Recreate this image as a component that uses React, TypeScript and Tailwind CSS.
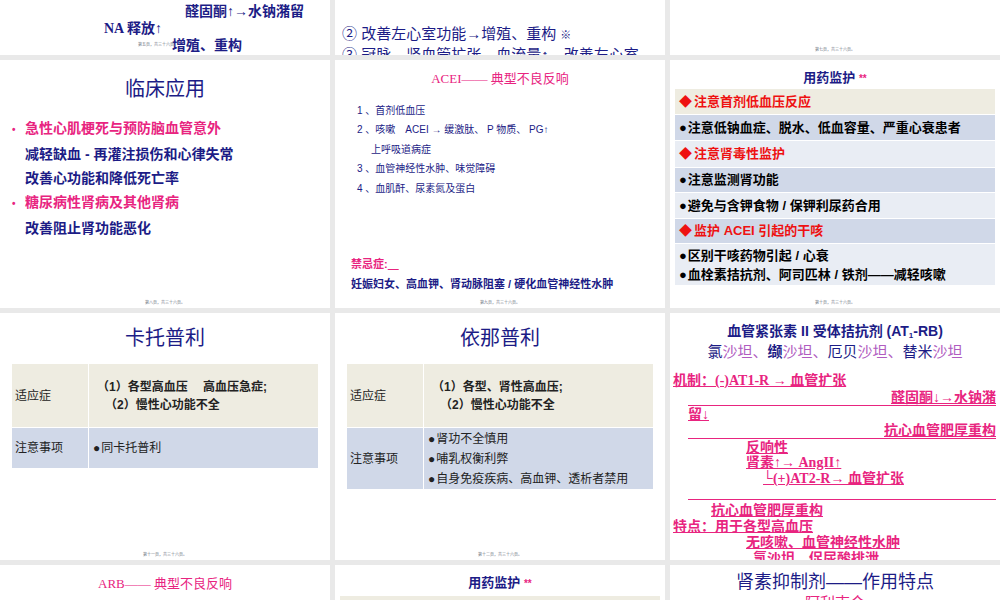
import React from "react";

const F = { fontFamily: '"Liberation Sans","Noto Sans CJK SC",sans-serif' };
const S = { fontFamily: '"Liberation Serif","Noto Sans CJK SC",serif' };

function Foot({ t }: { t: string }) {
  return <div className="absolute bottom-[2px] left-0 right-0 text-center text-[4px] text-gray-500">{t}</div>;
}

const Bul = () => <span className="mr-[1px]">●</span>;
const Dia = () => <span className="mr-[2px]">◆</span>;

export default function App() {
  return (
    <div style={F} className="w-[1000px] h-[600px] overflow-hidden bg-[#e9e9e9] grid grid-cols-[330px_330px_330px] grid-rows-[55px_248px_247px_35px] gap-[5px]">
      {/* row 1 */}
      <div className="relative bg-white overflow-hidden flex flex-col justify-end pb-[1px] text-[#1c1c86] font-bold text-[14px] leading-[17px]">
        <div className="pl-[185px]">醛固酮↑→水钠潴留</div>
        <div className="pl-[104px]" style={S}>NA 释放↑</div>
        <div className="pl-[172px]">增殖、重构</div>
        <div className="absolute left-[138px] bottom-[2px] text-[4px] text-gray-500 font-normal">第五页，共三十六页。</div>
      </div>
      <div className="relative bg-white overflow-hidden flex flex-col justify-end text-[#1c1c86] text-[15px] leading-[20px] pl-[7px]">
        <div>② 改善左心室功能→增殖、重构 <span className="text-[11px]">※</span></div>
        <div className="-mb-[10px] whitespace-nowrap">③ 冠脉、肾血管扩张→血流量↑→改善左心室</div>
      </div>
      <div className="relative bg-white overflow-hidden"><Foot t="第七页，共三十六页。" /></div>

      {/* row 2 */}
      <div className="relative bg-white overflow-hidden">
        <div className="text-center text-[#1c1c86] text-[20px] pt-[15px] leading-[28px]">临床应用</div>
        <div className="mt-[13px] pl-[12px] text-[14px] leading-[24px] font-bold">
          <div className="text-[#e8247f]"><span className="inline-block w-[13px] text-[10px]">•</span>急性心肌梗死与预防脑血管意外</div>
          <div className="text-[#1c1c86] pl-[13px]">减轻缺血 - 再灌注损伤和心律失常</div>
          <div className="text-[#1c1c86] pl-[13px]">改善心功能和降低死亡率</div>
          <div className="text-[#e8247f]"><span className="inline-block w-[13px] text-[10px]">•</span>糖尿病性肾病及其他肾病</div>
          <div className="text-[#1c1c86] pl-[13px]">改善阻止肾功能恶化</div>
        </div>
        <Foot t="第八页，共三十六页。" />
      </div>
      <div className="relative bg-white overflow-hidden">
        <div style={S} className="text-center text-[#e8247f] text-[13px] pt-[9px]">ACEI—— 典型不良反响</div>
        <div className="pl-[22px] mt-[12px] text-[10px] leading-[19.5px] text-[#1c1c86]">
          <div>1 、首剂低血压</div>
          <div>2 、咳嗽　ACEI → 缓激肽、 P 物质、 PG↑</div>
          <div className="pl-[14px]">上呼吸道病症</div>
          <div>3 、血管神经性水肿、味觉障碍</div>
          <div>4 、血肌酐、尿素氮及蛋白</div>
        </div>
        <div className="pl-[16px] mt-[56px] text-[11px] font-bold leading-[20px]">
          <div className="text-[#e8247f]">禁忌症:<span className="underline">　</span></div>
          <div className="text-[#1c1c86]">妊娠妇女、高血钾、肾动脉阻塞 / 硬化血管神经性水肿</div>
        </div>
        <Foot t="第九页，共三十六页。" />
      </div>
      <div className="relative bg-white overflow-hidden">
        <div className="text-center text-[#1c1c86] text-[13px] font-bold pt-[9px] leading-[18px]">用药监护 <span className="text-[#e8247f] text-[10px]">**</span></div>
        <div className="mx-[5px] mt-[1px] text-[13px] font-bold flex flex-col gap-[1px]">
          <div className="bg-[#eeece1] h-[25px] flex items-center pl-[4px] text-[#ee1111]"><Dia />注意首剂低血压反应</div>
          <div className="bg-[#d0d8e8] h-[25px] flex items-center pl-[4px] text-black"><Bul />注意低钠血症、脱水、低血容量、严重心衰患者</div>
          <div className="bg-[#e9edf4] h-[26px] flex items-center pl-[4px] text-[#ee1111]"><Dia />注意肾毒性监护</div>
          <div className="bg-[#d0d8e8] h-[24px] flex items-center pl-[4px] text-black"><Bul />注意监测肾功能</div>
          <div className="bg-[#e9edf4] h-[25px] flex items-center pl-[4px] text-black"><Bul />避免与含钾食物 / 保钾利尿药合用</div>
          <div className="bg-[#d0d8e8] h-[24px] flex items-center pl-[4px] text-[#ee1111]"><Dia />监护 ACEI 引起的干咳</div>
          <div className="bg-[#e9edf4] h-[41px] flex flex-col justify-center pl-[4px] text-black leading-[19px]">
            <div><Bul />区别干咳药物引起 / 心衰</div>
            <div><Bul />血栓素拮抗剂、阿司匹林 / 铁剂——减轻咳嗽</div>
          </div>
        </div>
        <Foot t="第十页，共三十六页。" />
      </div>

      {/* row 3 */}
      <div className="relative bg-white overflow-hidden">
        <div className="text-center text-[#1c1c86] text-[20px] pt-[11px] leading-[28px]">卡托普利</div>
        <div className="mx-[12px] mt-[12px] text-[12px] text-[#222] grid grid-cols-[76px_1fr] gap-[1px]">
          <div className="bg-[#eeece1] h-[63px] flex items-center pl-[3px]">适应症</div>
          <div className="bg-[#eeece1] h-[63px] flex flex-col justify-center pl-[8px] font-bold leading-[18px]">
            <div>（1）各型高血压　 高血压急症;</div>
            <div className="pl-[8px]">（2）慢性心功能不全</div>
          </div>
          <div className="bg-[#d0d8e8] h-[40px] flex items-center pl-[3px]">注意事项</div>
          <div className="bg-[#d0d8e8] h-[40px] flex items-center pl-[4px]"><Bul />同卡托普利</div>
        </div>
        <Foot t="第十一页，共三十六页。" />
      </div>
      <div className="relative bg-white overflow-hidden">
        <div className="text-center text-[#1c1c86] text-[20px] pt-[11px] leading-[28px]">依那普利</div>
        <div className="mx-[12px] mt-[12px] text-[12px] text-[#222] grid grid-cols-[76px_1fr] gap-[1px]">
          <div className="bg-[#eeece1] h-[63px] flex items-center pl-[3px]">适应症</div>
          <div className="bg-[#eeece1] h-[63px] flex flex-col justify-center pl-[8px] font-bold leading-[18px]">
            <div>（1）各型、肾性高血压;</div>
            <div className="pl-[8px]">（2）慢性心功能不全</div>
          </div>
          <div className="bg-[#d0d8e8] h-[61px] flex items-center pl-[3px]">注意事项</div>
          <div className="bg-[#d0d8e8] h-[61px] flex flex-col justify-center pl-[4px] leading-[20px]">
            <div><Bul />肾功不全慎用</div>
            <div><Bul />哺乳权衡利弊</div>
            <div><Bul />自身免疫疾病、高血钾、透析者禁用</div>
          </div>
        </div>
        <Foot t="第十二页，共三十六页。" />
      </div>
      <div className="relative bg-white overflow-hidden">
        <div className="text-center text-[#1c1c86] text-[14px] font-bold pt-[8px] leading-[20px]">血管紧张素 II 受体拮抗剂 (AT<sub className="text-[8px]">1</sub>-RB)</div>
        <div className="text-center text-[15px] leading-[22px]">
          <span className="text-[#1c1c86]">氯</span><span className="text-[#b05cc0]">沙坦、</span><span className="text-[#1c1c86] font-bold">缬</span><span className="text-[#b05cc0]">沙坦、</span><span className="text-[#1c1c86]">厄贝</span><span className="text-[#b05cc0]">沙坦、</span><span className="text-[#1c1c86]">替米</span><span className="text-[#b05cc0]">沙坦</span>
        </div>
        <div style={S} className="mt-[10px] pl-[3px] text-[#e8247f] font-bold text-[14px] leading-[16px] underline">
          <div>机制：(-)AT1-R → 血管扩张</div>
          <div className="ml-[15px] mr-[4px] border-b border-[#e8247f] text-right no-underline" style={F}>醛固酮↓→水钠潴</div>
          <div className="pl-[15px]" style={F}>留↓</div>
          <div className="ml-[15px] mr-[4px] border-b border-[#e8247f] text-right no-underline" style={F}>抗心血管肥厚重构</div>
          <div className="pl-[73px]" style={F}>反响性</div>
          <div className="pl-[73px]">肾素↑→ AngII↑</div>
          <div className="pl-[90px]">└(+)AT2-R→ 血管扩张</div>
          <div className="ml-[15px] mr-[4px] border-b border-[#e8247f] h-[13px]"></div>
          <div className="pl-[38px] mt-[2px]" style={F}>抗心血管肥厚重构</div>
          <div style={F}>特点：用于各型高血压</div>
          <div className="pl-[73px]" style={F}>无咳嗽、血管神经性水肿</div>
          <div className="pl-[80px]" style={F}>氯沙坦　促尿酸排泄</div>
        </div>
      </div>

      {/* row 4 */}
      <div className="relative bg-white overflow-hidden">
        <div style={S} className="text-center text-[#e8247f] text-[13px] pt-[9px]">ARB—— 典型不良反响</div>
      </div>
      <div className="relative bg-white overflow-hidden">
        <div className="text-center text-[#1c1c86] text-[13px] font-bold pt-[9px] leading-[18px]">用药监护 <span className="text-[#e8247f] text-[10px]">**</span></div>
        <div className="mx-[5px] mt-[3px] bg-[#eeece1] h-[20px]"></div>
      </div>
      <div className="relative bg-white overflow-hidden">
        <div className="text-center text-[#1c1c86] text-[18px] pt-[5px] leading-[24px]">肾素抑制剂——作用特点</div>
        <div className="text-center text-[#e8247f] text-[15px] leading-[18px]">阿利吉仑</div>
      </div>
    </div>
  );
}
